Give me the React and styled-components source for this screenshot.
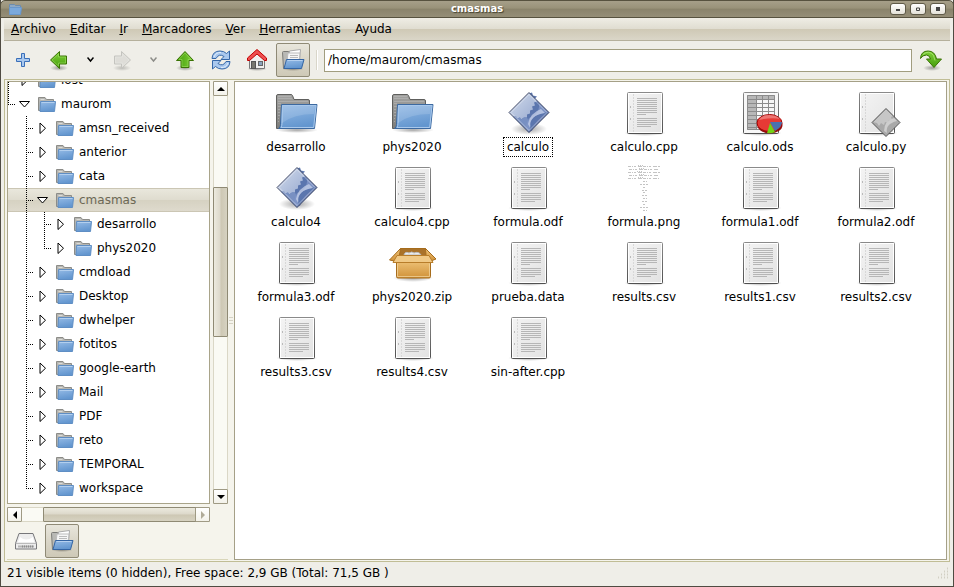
import React, { useState } from "react";
import styled, { createGlobalStyle, css } from "styled-components";

const GlobalStyle = createGlobalStyle`
  * {
    box-sizing: border-box;
  }

  body {
    margin: 0;
    font-family: "DejaVu Sans", sans-serif;
    font-size: 12px;
    color: #000;
  }

  button,
  input {
    font: inherit;
    color: inherit;
    padding: 0;
    margin: 0;
  }
`;

/* ---------- window ---------- */

const Window = styled.div`
  display: flex;
  flex-direction: column;
  height: 100vh;
  background: #efeee8;
  border: 1px solid #4f4b42;
  border-top: none;
`;

const TitleBar = styled.header`
  display: flex;
  align-items: center;
  flex: none;
  height: 18px;
  margin: 0 -1px;
  padding: 0 7px;
  border: 1px solid #57523f;
  border-radius: 5px 5px 0 0;
  background: linear-gradient(#a69f89, #999279 45%, #8a836b 50%, #958e77);
`;

const TitleSide = styled.div`
  display: flex;
  flex: 1;
  gap: 4px;
  justify-content: ${(props) => (props.$end ? "flex-end" : "flex-start")};
`;

const Title = styled.h1`
  margin: 0;
  font-size: 10px;
  line-height: 14px;
  font-weight: bold;
  color: #fff;
  text-shadow: 1px 1px 1px #45412f;
`;

const WindowButton = styled.button`
  display: flex;
  align-items: center;
  justify-content: center;
  width: 16px;
  height: 12px;
  border: 1px solid #5f5a48;
  border-radius: 3px;
  background: linear-gradient(#fff, #e4e2d8);
`;

const MenuBar = styled.nav`
  display: flex;
  flex: none;
  height: 23px;
  margin: 0 3px;
  border-bottom: 1px solid #b5b09c;
  background: linear-gradient(#efede5, #e0ddd1 48%, #cfc9b6 52%, #dad6c8);
`;

const MenuItem = styled.button`
  padding: 0 7px;
  border: none;
  background: none;
`;

const ToolBar = styled.div`
  display: flex;
  align-items: center;
  flex: none;
  height: 38px;
  padding: 0 4px;
`;

const pressed = css`
  border-color: #8f8a76;
  background: linear-gradient(#e8e6dc, #dad6c8 50%, #cec9b7);
`;

const ToolButton = styled.button`
  display: flex;
  align-items: center;
  justify-content: center;
  flex: none;
  width: ${(props) => (props.$narrow ? 25 : 34)}px;
  height: 34px;
  margin: 0 1px;
  border: 1px solid transparent;
  border-radius: 2px;
  background: none;
  ${(props) => props.$pressed && pressed}
`;

const Separator = styled.div`
  flex: none;
  width: 2px;
  height: 20px;
  margin: 0 6px 0 5px;
  border-left: 1px solid #d9d6c9;
  border-right: 1px solid #fff;
`;

const PathInput = styled.input`
  flex: 1;
  min-width: 0;
  height: 23px;
  margin-right: 1px;
  padding: 0 3px;
  border: 1px solid #a19d7f;
  background: #fff;
  outline: none;
`;

/* ---------- body ---------- */

const Body = styled.main`
  display: flex;
  flex: 1;
  min-height: 0;
  margin: 0 3px;
  padding: 1px 2px;
  border: 1px solid #c0bd95;
  background: #f5f4ec;
`;

const SidePane = styled.aside`
  display: flex;
  flex-direction: column;
  flex: none;
  width: 221px;
`;

const TreeArea = styled.div`
  display: grid;
  grid-template-columns: 1fr 15px;
  grid-template-rows: minmax(0, 1fr) 15px;
  gap: 3px;
  flex: 1;
  min-height: 0;
`;

const Tree = styled.ul`
  display: flex;
  flex-direction: column;
  justify-content: flex-end;
  margin: 0;
  padding: 0 0 3px;
  overflow: hidden;
  list-style: none;
  border: 1px solid #a9a48a;
  background: #fff;
`;

const TreeRow = styled.li`
  display: flex;
  align-items: center;
  flex: none;
  height: 24px;
  ${(props) =>
    props.$selected &&
    css`
      color: #6c6855;
      border-top: 1px solid #cbc6b4;
      border-bottom: 1px solid #cbc6b4;
      background: linear-gradient(#e9e7dc, #dfdccf 48%, #d6d2c2 52%, #dedacd);
    `}
`;

const dotsDown = "repeating-linear-gradient(#000 0 1px, transparent 1px 2px)";
const dotsRight =
  "repeating-linear-gradient(90deg, #000 0 1px, transparent 1px 2px)";

const GuideCell = styled.span`
  width: 18px;
  height: 24px;
  background: ${(props) => (props.$line ? dotsDown : "none")} 0 0 / 1px 100%
    no-repeat;
`;

const Branch = styled.span`
  width: 8px;
  height: 24px;
  background:
    ${dotsDown} 0 0 / 1px ${(props) => (props.$last ? "13px" : "100%")}
      no-repeat,
    ${dotsRight} 0 12px / 7px 1px no-repeat;
`;

const Expander = styled.button`
  display: flex;
  align-items: center;
  justify-content: center;
  width: 18px;
  height: 18px;
  border: none;
  background: none;
`;

const TreeLabel = styled.span`
  display: flex;
  align-items: center;
  gap: 5px;
  padding-left: 4px;
  white-space: nowrap;
`;

const ScrollBar = styled.div`
  display: flex;
  flex-direction: ${(props) => (props.$vertical ? "column" : "row")};
  min-height: 0;
  border: 1px solid #dad7c6;
  background: #fafaf4;
`;

const ScrollArrow = styled.button`
  display: flex;
  align-items: center;
  justify-content: center;
  flex: none;
  width: 15px;
  height: 15px;
  margin: -1px;
  border: 1px solid #9f9a84;
  border-radius: 1px;
  background: linear-gradient(#fff, #f3f2ea);
`;

const ScrollSpace = styled.div`
  flex: ${(props) => props.$size} 1 0;
`;

const ScrollThumb = styled.div`
  flex: ${(props) => props.$size} 1 0;
  margin: -1px;
  border: 1px solid #8f8a74;
  border-radius: 1px;
  background: linear-gradient(
    ${(props) => (props.$vertical ? "90deg" : "180deg")},
    #eceade,
    #dcd8ca 48%,
    #cdc7b3 52%,
    #d6d2c1
  );
`;

const PaneTabs = styled.div`
  display: flex;
  margin: 1px 0 0;
  padding: 1px 0 1px 1px;
  border-bottom: 1px solid #d9d6b9;
`;

const PaneHandle = styled.div`
  display: flex;
  flex-direction: column;
  justify-content: center;
  align-items: center;
  gap: 2px;
  flex: none;
  width: 6px;
  cursor: col-resize;
`;

const Grip = styled.span`
  width: 4px;
  height: 1px;
  background: #d5d2c4;
`;

const FileView = styled.section`
  flex: 1;
  min-width: 0;
  overflow: hidden;
  padding: 7px 3px;
  border: 1px solid #a5a087;
  background: #fff;
`;

const FileGrid = styled.ul`
  display: grid;
  grid-template-columns: repeat(auto-fill, 116px);
  row-gap: 7px;
  margin: 0;
  padding: 0;
  list-style: none;
`;

const FileItem = styled.li`
  display: flex;
  flex-direction: column;
  align-items: center;
`;

const FileLabel = styled.span`
  height: 20px;
  padding: 0 3px;
  line-height: 18px;
  white-space: nowrap;
  border: 1px dotted ${(props) => (props.$focused ? "#000" : "transparent")};
`;

const StatusBar = styled.footer`
  display: flex;
  align-items: center;
  justify-content: space-between;
  flex: none;
  height: 24px;
  padding: 0 4px 2px 6px;
`;

/* ---------- icons ---------- */

const HiddenSvg = styled.svg`
  position: absolute;
`;

const Defs = () => (
  <HiddenSvg width="0" height="0" aria-hidden="true">
    <defs>
      <linearGradient id="blue" x1="0" y1="0" x2="0.3" y2="1">
        <stop offset="0" stopColor="#95bbe6" />
        <stop offset="1" stopColor="#6396cf" />
      </linearGradient>
      <linearGradient id="grey" x1="0" y1="0" x2="0" y2="1">
        <stop offset="0" stopColor="#a3a3a1" />
        <stop offset="1" stopColor="#7d7d7b" />
      </linearGradient>
      <linearGradient id="green" x1="0" y1="0" x2="0" y2="1">
        <stop offset="0" stopColor="#7fd038" />
        <stop offset="1" stopColor="#459d0c" />
      </linearGradient>
      <linearGradient id="page" x1="0" y1="0" x2="1" y2="1">
        <stop offset="0" stopColor="#f4f4f4" />
        <stop offset="1" stopColor="#e2e2e2" />
      </linearGradient>
      <linearGradient id="pageEdge" x1="0" y1="0" x2="0" y2="1">
        <stop offset="0" stopColor="#8a8a8a" />
        <stop offset="1" stopColor="#505050" />
      </linearGradient>
      <linearGradient id="gem" x1="0" y1="0" x2="1" y2="1">
        <stop offset="0" stopColor="#d3dcec" />
        <stop offset="1" stopColor="#7f95c4" />
      </linearGradient>
      <linearGradient id="carton" x1="0" y1="0" x2="0" y2="1">
        <stop offset="0" stopColor="#f0c57c" />
        <stop offset="1" stopColor="#d09239" />
      </linearGradient>
      <radialGradient id="shadow">
        <stop offset="0" stopColor="#000" stopOpacity="0.35" />
        <stop offset="1" stopColor="#000" stopOpacity="0" />
      </radialGradient>
    </defs>
  </HiddenSvg>
);

const SmallFolder = () => (
  <svg width="18" height="17" viewBox="0 0 18 17">
    <path d="M0.5 14.5v-13h6.500l1.500 2h7v11z" fill="#b6b6b2" stroke="#8c8c88" />
    <path d="M2.5 5.5h13M2.5 3.5h4" stroke="#dcdcd8" />
    <path d="M2.5 5.5h15l-1 10h-14.5z" fill="url(#blue)" stroke="#5f8ec4" />
    <path d="M3.5 6.5h13" stroke="#b3cfee" />
  </svg>
);

const BigFolder = () => (
  <svg width="48" height="48" viewBox="0 0 48 48">
    <ellipse cx="25" cy="41" rx="21" ry="3" fill="url(#shadow)" />
    <path
      d="M4.5 39.5V7q0-1.5 1.5-1.5H19q1 0 1.5 1l1.5 4H36q1.5 0 1.5 1.5v27.5z"
      fill="url(#grey)"
      stroke="#5f5f5d"
    />
    <path
      d="M6 7.5h13M6 9.5h14M6 12.5h30M6 14.5h3M6 17.5h3M6 20.5h2M6 23.5h2M6 26.5h2M6 29.5h1M6 32.5h1"
      stroke="#bababa"
      opacity="0.6"
    />
    <path
      d="M9.5 15.5h35.5l-2.5 24H6.5q2-1 2-4z"
      fill="url(#blue)"
      stroke="#3c69a0"
    />
    <path d="M10.5 16.5h33.5l-2.3 22H9q1-2 1-4z" fill="none" stroke="#a8c8ec" />
    <path d="M11 17h32l-1 8q-20 0-32 9z" fill="#fff" opacity="0.14" />
  </svg>
);

const Page = ({ ruled = true }) => (
  <>
    <ellipse cx="25" cy="44" rx="21" ry="3" fill="url(#shadow)" />
    <rect x="7.5" y="3.5" width="35" height="41" rx="1" fill="url(#page)" stroke="url(#pageEdge)" />
    <rect x="8.5" y="4.5" width="33" height="39" fill="none" stroke="#fff" />
    <path d="M13.5 5v38" stroke="#d8d8d8" strokeDasharray="2 1" />
    <path d="M10.5 17v2M10.5 29v2" stroke="#bbb" />
    {ruled && (
      <path
        d="M17 9.5h20M17 11.5h20M17 13.5h20M17 15.5h20M17 17.5h20M17 19.5h20M17 21.5h20M17 23.5h20M17 25.5h9M17 29.5h20M17 31.5h20M17 33.5h20M17 35.5h20M17 37.5h14"
        stroke="#b6b6b6"
      />
    )}
  </>
);

const DocumentIcon = () => (
  <svg width="48" height="48" viewBox="0 0 48 48">
    <Page />
  </svg>
);

const ProgramIcon = () => (
  <svg width="48" height="48" viewBox="0 0 48 48">
    <ellipse cx="25" cy="40" rx="18" ry="6" fill="url(#shadow)" />
    <path d="M25 3.5L45 23.5L25 43.5L5 23.5z" fill="url(#gem)" />
    <path
      d="M25 4l20 19.500-20 20L9 27.500l3 0 1 2 3-1 1 2 3-2 3 0 0-3 3-1 0-3 3-1-1-3 3-1-1-3 3-1-2-3 2-2-4-1-1-3-3 1z"
      fill="#5b76ae"
    />
    <path
      d="M9 27.500l3 0 1 2 3-1 1 2 3-2 3 0 4 8-2 7z"
      fill="#7890c2"
    />
    <path d="M25 42q-2-16 19-19l-9-9q1 12-10 15-3 6-3 10z" fill="#8196c8" opacity="0.8" />
    <path d="M26 39q-1-13 15-15l-4-4q-11 4-13 15z" fill="#c7d1ea" opacity="0.75" />
    <path d="M28 42q3-12 15-17l1-1-18 18z" fill="#6a7fb5" />
    <path d="M25 3.5L45 23.5L25 43.5L5 23.5z" fill="none" stroke="#4a526c" />
    <path d="M25 5.5L43 23.5L25 41.5L7 23.5z" fill="none" stroke="#fff" opacity="0.4" />
  </svg>
);

const SpreadsheetIcon = () => (
  <svg width="48" height="48" viewBox="0 0 48 48">
    <ellipse cx="25" cy="44" rx="21" ry="3" fill="url(#shadow)" />
    <rect x="7.5" y="3.5" width="35" height="41" rx="1" fill="#f7f7f7" stroke="url(#pageEdge)" />
    <path d="M11 6h28v5H21v30H11z" fill="#b8b8b8" />
    <path
      d="M11.5 6.5h27v34h-27zM11 10.5h28M11 14.5h28M11 18.5h28M11 22.5h28M11 26.5h28M11 30.5h28M11 34.5h28M11 38.5h28M20.5 6v35M26.5 6v35M32.5 6v35"
      fill="none"
      stroke="#8c8c8c"
    />
    <ellipse cx="34" cy="36" rx="12.5" ry="8.5" fill="#8f0f0f" />
    <ellipse cx="33.5" cy="34" rx="12.5" ry="8.5" fill="#e63a35" stroke="#a40000" />
    <path d="M23 31q3-6 11-5 7 0 10 4-8-2-21 1z" fill="#fff" opacity="0.3" />
    <path d="M34 33h12q0 5-7 9z" fill="#4a72b0" />
    <path d="M34 34l5 9q-4 2-8 1z" fill="#73d216" />
  </svg>
);

const ScriptIcon = () => (
  <svg width="50" height="48" viewBox="-1 0 50 48">
    <Page ruled={false} />
    <path d="M34 19.5L48 33.5L34 47.5L20 33.5z" fill="#a9a9a9" />
    <path d="M34 20l7 7-2 1 1 3-3 0-1 3-3-1-1 3-3-2-2 3-2-3-4-1z" fill="#c6c6c6" />
    <path d="M35 44q-2-9 10-12l-3-3q-10 3-10 13z" fill="#cecece" />
    <path d="M34 19.5L48 33.5L34 47.5L20 33.5z" fill="none" stroke="#555" />
  </svg>
);

const FormulaIcon = () => (
  <svg width="48" height="48" viewBox="0 0 48 48">
    <g stroke="#8a8a8a" opacity="0.5">
      <path d="M8 2.5h32M9 5.5h30M8 8.5h32M9 11.5h30M8 14.5h31" strokeDasharray="3 1 1 1 2 2 4 1" />
      <path d="M18 1.5h6M19 4.5h5M17 7.5h6M19 10.5h6M18 13.5h5" strokeDasharray="1 1" />
      <path
        d="M23 17.5h4M20 20.5h9M23 23.5h3M22 26.5h6M23 28.5h3M22 31.5h6M23 34.5h4M22 37.5h6M23 40.5h3M20 43.5h9M23 46.5h4"
        strokeDasharray="2 1"
      />
    </g>
  </svg>
);

const ArchiveIcon = () => (
  <svg width="48" height="48" viewBox="0 0 48 48">
    <ellipse cx="25" cy="39" rx="20" ry="4" fill="url(#shadow)" />
    <path d="M12.5 9.5h25l4 9h-34z" fill="#a9722a" stroke="#a66c1c" />
    <path d="M16 16q1-4 5-2 3-2 5 0 5-2 7 2z" fill="#ececec" stroke="#bbb" />
    <path d="M12.5 9.5L1.500 21l5 1 5-6zM37.5 9.5L48 20l-5 2-5-6z" fill="url(#carton)" stroke="#a66c1c" />
    <path d="M8.5 20.5h34v17q0 1.5-1.5 1.5h-31q-1.5 0-1.5-1.5z" fill="url(#carton)" stroke="#a66c1c" />
    <path d="M9 16.5h32l4 7H5z" fill="#f0c986" stroke="#b87d2a" />
    <path d="M9.5 24.5v13h32v-13" fill="none" stroke="#f5d9a4" opacity="0.7" />
  </svg>
);

const OpenFolder = () => (
  <svg width="24" height="24" viewBox="0 0 24 24">
    <ellipse cx="12" cy="21" rx="11" ry="2" fill="url(#shadow)" />
    <path d="M2.5 20.5L1.500 4.500q0-1 1-1h5l1 2h10v15z" fill="#b9b9b5" stroke="#7c7c78" />
    <path d="M7.500 13L8.500 3l11-1.500-1 12z" fill="#fff" stroke="#aaa" />
    <path d="M6 13l1-8 12 0-1 9z" fill="#f6f6f6" stroke="#bbb" />
    <path d="M9 7.500h8M9 9.500h8" stroke="#bbb" />
    <path d="M5.500 11.500h17.500l-2.500 9H3z" fill="url(#blue)" stroke="#3465a4" />
    <path d="M6.500 12.500h15" stroke="#b5d0ef" />
  </svg>
);

const PlusIcon = () => (
  <svg width="24" height="24" viewBox="0 0 24 24">
    <path
      d="M10.500 5.500h3v5h5v3h-5v5h-3v-5h-5v-3h5z"
      fill="#a9c8ee"
      stroke="#3a6fb9"
      strokeLinejoin="round"
    />
  </svg>
);

const ArrowShape = ({ angle = 0, disabled }) => (
  <svg width="24" height="24" viewBox="0 0 24 24" opacity={disabled ? 0.6 : 1}>
    <ellipse cx="12" cy="20" rx="9" ry="3" fill="url(#shadow)" />
    <g transform={`rotate(${angle} 12 12)`}>
      <path
        d="M3.500 12L12.500 3.500v4.500h7v8h-7v4.500z"
        fill={disabled ? "#d3d3cf" : "url(#green)"}
        stroke={disabled ? "#a9a9a5" : "#3a7304"}
        strokeLinejoin="round"
      />
      <path
        d="M5 12l6.500-6v3h7v6h-7v3z"
        fill="none"
        stroke={disabled ? "#e6e6e2" : "#a5e66b"}
        opacity="0.5"
      />
    </g>
  </svg>
);

const ChevronIcon = ({ color }) => (
  <svg width="7" height="6" viewBox="0 0 7 6">
    <path d="M0.500 0.500L3.500 4L6.500 0.500" fill="none" stroke={color} strokeWidth="1.500" />
  </svg>
);

const RefreshIcon = () => (
  <svg width="24" height="24" viewBox="0 0 24 24">
    <g fill="#a9c8ee" stroke="#3567a8" strokeLinejoin="round">
      <path d="M3 10.500Q3.500 3 11 3q4 0 6.500 2.500L20.500 3v8.500h-8.500l3-3q-5-3.500-8 2z" />
      <path d="M21 13.500Q20.500 21 13 21q-4 0-6.500-2.500L3.500 21v-8.500h8.500l-3 3q5 3.500 8-2z" />
    </g>
    <path d="M5 9q2-5 7-4.500M19 15q-2 5-7 4.500" fill="none" stroke="#e1edfa" />
  </svg>
);

const HomeIcon = () => (
  <svg width="24" height="24" viewBox="0 0 24 24">
    <ellipse cx="12" cy="21" rx="10" ry="2" fill="url(#shadow)" />
    <path d="M4.500 11L12 4l7.500 7v9.500h-15z" fill="#f1f1ef" stroke="#777" />
    <rect x="6.500" y="13.500" width="4" height="7" fill="#77776f" stroke="#555" />
    <rect x="13.500" y="13.500" width="4" height="4" fill="#8aa3bd" stroke="#666" />
    <path
      d="M12 1.500l9.500 8.500v2.500h-2L12 6 4.500 12.500h-2V10z"
      fill="#ef5050"
      stroke="#c00000"
      strokeLinejoin="round"
    />
  </svg>
);

const GoIcon = () => (
  <svg width="24" height="24" viewBox="0 0 24 24">
    <ellipse cx="13" cy="20" rx="9" ry="3" fill="url(#shadow)" />
    <path
      d="M1.500 10.500Q2 3 9 3q7 0 8.500 8h5L15 19.500 7.500 11h4q-1-4-4-4-4 0-6 3.500z"
      fill="url(#green)"
      stroke="#3a7304"
      strokeLinejoin="round"
    />
    <path d="M4 6.500q6-5 10.500 1l1.500 5" fill="none" stroke="#b4ea80" opacity="0.7" />
  </svg>
);

const DriveIcon = () => (
  <svg width="24" height="24" viewBox="0 0 24 24">
    <path d="M1.500 14.500L5 4.500h14l3.500 10v5.500h-21z" fill="#ededed" stroke="#77777a" strokeLinejoin="round" />
    <path d="M2 14.500h20" stroke="#bbb" />
    <path d="M6 8q6 5 13 0l1 5H4z" fill="#fff" />
    <path d="M4 17.500h16" stroke="#b4b4b4" strokeWidth="2" />
    <path d="M8 17.500h12" stroke="#8d8d8d" strokeWidth="2" strokeDasharray="1 1" />
  </svg>
);

const Triangle = ({ direction, color = "#000" }) => {
  const points = {
    up: "0,6 4,2 8,6",
    down: "0,2 4,6 8,2",
    left: "6,0 2,4 6,8",
    right: "2,0 6,4 2,8",
  };
  return (
    <svg width="8" height="8" viewBox="0 0 8 8">
      <polygon points={points[direction]} fill={color} />
    </svg>
  );
};

const ExpanderIcon = ({ open }) => (
  <svg width="13" height="13" viewBox="0 0 13 13">
    <path
      d={open ? "M0.500 3.500H10.500L5.500 9z" : "M3 1V11.500L8.500 6.250z"}
      fill="#fff"
      stroke="#000"
    />
  </svg>
);

/* ---------- data ---------- */

const menus = ["Archivo", "Editar", "Ir", "Marcadores", "Ver", "Herramientas", "Ayuda"];

// guides: one entry for each outer level, true where its line goes on below
const tree = [
  { name: "lost", guides: [] },
  { name: "maurom", guides: [], open: true, last: true },
  { name: "amsn_received", guides: [false] },
  { name: "anterior", guides: [false] },
  { name: "cata", guides: [false] },
  { name: "cmasmas", guides: [false], open: true },
  { name: "desarrollo", guides: [false, true] },
  { name: "phys2020", guides: [false, true], last: true },
  { name: "cmdload", guides: [false] },
  { name: "Desktop", guides: [false] },
  { name: "dwhelper", guides: [false] },
  { name: "fotitos", guides: [false] },
  { name: "google-earth", guides: [false] },
  { name: "Mail", guides: [false] },
  { name: "PDF", guides: [false] },
  { name: "reto", guides: [false] },
  { name: "TEMPORAL", guides: [false] },
  { name: "workspace", guides: [false], last: true },
];

const files = [
  { name: "desarrollo", icon: BigFolder },
  { name: "phys2020", icon: BigFolder },
  { name: "calculo", icon: ProgramIcon },
  { name: "calculo.cpp", icon: DocumentIcon },
  { name: "calculo.ods", icon: SpreadsheetIcon },
  { name: "calculo.py", icon: ScriptIcon },
  { name: "calculo4", icon: ProgramIcon },
  { name: "calculo4.cpp", icon: DocumentIcon },
  { name: "formula.odf", icon: DocumentIcon },
  { name: "formula.png", icon: FormulaIcon },
  { name: "formula1.odf", icon: DocumentIcon },
  { name: "formula2.odf", icon: DocumentIcon },
  { name: "formula3.odf", icon: DocumentIcon },
  { name: "phys2020.zip", icon: ArchiveIcon },
  { name: "prueba.data", icon: DocumentIcon },
  { name: "results.csv", icon: DocumentIcon },
  { name: "results1.csv", icon: DocumentIcon },
  { name: "results2.csv", icon: DocumentIcon },
  { name: "results3.csv", icon: DocumentIcon },
  { name: "results4.csv", icon: DocumentIcon },
  { name: "sin-after.cpp", icon: DocumentIcon },
];

/* ---------- parts ---------- */

const Header = () => (
  <TitleBar>
    <TitleSide>
      <svg width="14" height="12" viewBox="0 0 14 12">
        <path d="M1.500 10.500v-9h5l1 1h5v8z" fill="#8fa9c4" stroke="#6d8cae" />
        <path d="M1.500 4.500h12l-1 7h-11z" fill="#7ba9dc" stroke="#6a98cc" />
      </svg>
    </TitleSide>
    <Title>cmasmas</Title>
    <TitleSide $end>
      <WindowButton aria-label="Minimizar">
        <svg width="4" height="4"><rect y="2" width="4" height="2" fill="#444" /></svg>
      </WindowButton>
      <WindowButton aria-label="Maximizar">
        <svg width="4" height="4"><path d="M0.500 1h3v2.500h-3z" fill="none" stroke="#444" /></svg>
      </WindowButton>
      <WindowButton aria-label="Cerrar">
        <svg width="4" height="4"><rect width="4" height="4" fill="#444" /></svg>
      </WindowButton>
    </TitleSide>
  </TitleBar>
);

const Tools = () => {
  const [path, setPath] = useState("/home/maurom/cmasmas");
  return (
    <ToolBar>
      <ToolButton aria-label="Nueva ventana"><PlusIcon /></ToolButton>
      <ToolButton aria-label="Atrás"><ArrowShape /></ToolButton>
      <ToolButton $narrow aria-label="Historial atrás"><ChevronIcon color="#000" /></ToolButton>
      <ToolButton disabled aria-label="Adelante"><ArrowShape angle={180} disabled /></ToolButton>
      <ToolButton $narrow disabled aria-label="Historial adelante"><ChevronIcon color="#8c8c88" /></ToolButton>
      <ToolButton aria-label="Subir"><ArrowShape angle={90} /></ToolButton>
      <ToolButton aria-label="Recargar"><RefreshIcon /></ToolButton>
      <ToolButton aria-label="Carpeta personal"><HomeIcon /></ToolButton>
      <ToolButton $pressed aria-pressed="true" aria-label="Panel lateral"><OpenFolder /></ToolButton>
      <Separator />
      <PathInput
        aria-label="Ruta"
        value={path}
        onChange={(e) => setPath(e.target.value)}
      />
      <ToolButton aria-label="Ir a la ruta"><GoIcon /></ToolButton>
    </ToolBar>
  );
};

const Scroll = ({ vertical, before, size, after }) => (
  <ScrollBar $vertical={vertical}>
    <ScrollArrow aria-label={vertical ? "Arriba" : "Izquierda"}>
      <Triangle direction={vertical ? "up" : "left"} />
    </ScrollArrow>
    <ScrollSpace $size={before} />
    <ScrollThumb $vertical={vertical} $size={size} />
    <ScrollSpace $size={after} />
    <ScrollArrow aria-label={vertical ? "Abajo" : "Derecha"}>
      <Triangle
        direction={vertical ? "down" : "right"}
        color={after ? "#000" : "#b0ab98"}
      />
    </ScrollArrow>
  </ScrollBar>
);

const FolderTree = ({ current }) => (
  <Tree>
    {tree.map((item) => (
      <TreeRow key={item.name} $selected={item.name === current}>
        {item.guides.map((line, i) => (
          <GuideCell key={i} $line={line} />
        ))}
        <Branch $last={item.last} />
        <Expander aria-label={item.name} aria-expanded={!!item.open}>
          <ExpanderIcon open={item.open} />
        </Expander>
        <TreeLabel>
          <SmallFolder />
          {item.name}
        </TreeLabel>
      </TreeRow>
    ))}
  </Tree>
);

export default function App() {
  return (
    <Window>
      <GlobalStyle />
      <Defs />
      <Header />
      <MenuBar>
        {menus.map((name) => (
          <MenuItem key={name}>
            {name === "Ayuda" ? "A" : <u>{name[0]}</u>}
            {name.slice(1)}
          </MenuItem>
        ))}
      </MenuBar>
      <Tools />
      <Body>
        <SidePane>
          <TreeArea>
            <FolderTree current="cmasmas" />
            <Scroll vertical before={93} size={147} after={154} />
            <Scroll before={23} size={152} after={0} />
          </TreeArea>
          <PaneTabs>
            <ToolButton aria-label="Lugares"><DriveIcon /></ToolButton>
            <ToolButton $pressed aria-pressed="true" aria-label="Árbol"><OpenFolder /></ToolButton>
          </PaneTabs>
        </SidePane>
        <PaneHandle>
          <Grip />
          <Grip />
          <Grip />
        </PaneHandle>
        <FileView>
          <FileGrid>
            {files.map(({ name, icon: Icon }) => (
              <FileItem key={name}>
                <Icon />
                <FileLabel $focused={name === "calculo"}>{name}</FileLabel>
              </FileItem>
            ))}
          </FileGrid>
        </FileView>
      </Body>
      <StatusBar>
        21 visible items (0 hidden), Free space: 2,9 GB (Total: 71,5 GB )
        <svg width="12" height="12">
          <path
            d="M10 1.500h2M7 4.500h5M4 7.500h8M1 10.500h11"
            stroke="#d2cfc3"
            strokeDasharray="1 2"
            strokeWidth="2"
          />
        </svg>
      </StatusBar>
    </Window>
  );
}
